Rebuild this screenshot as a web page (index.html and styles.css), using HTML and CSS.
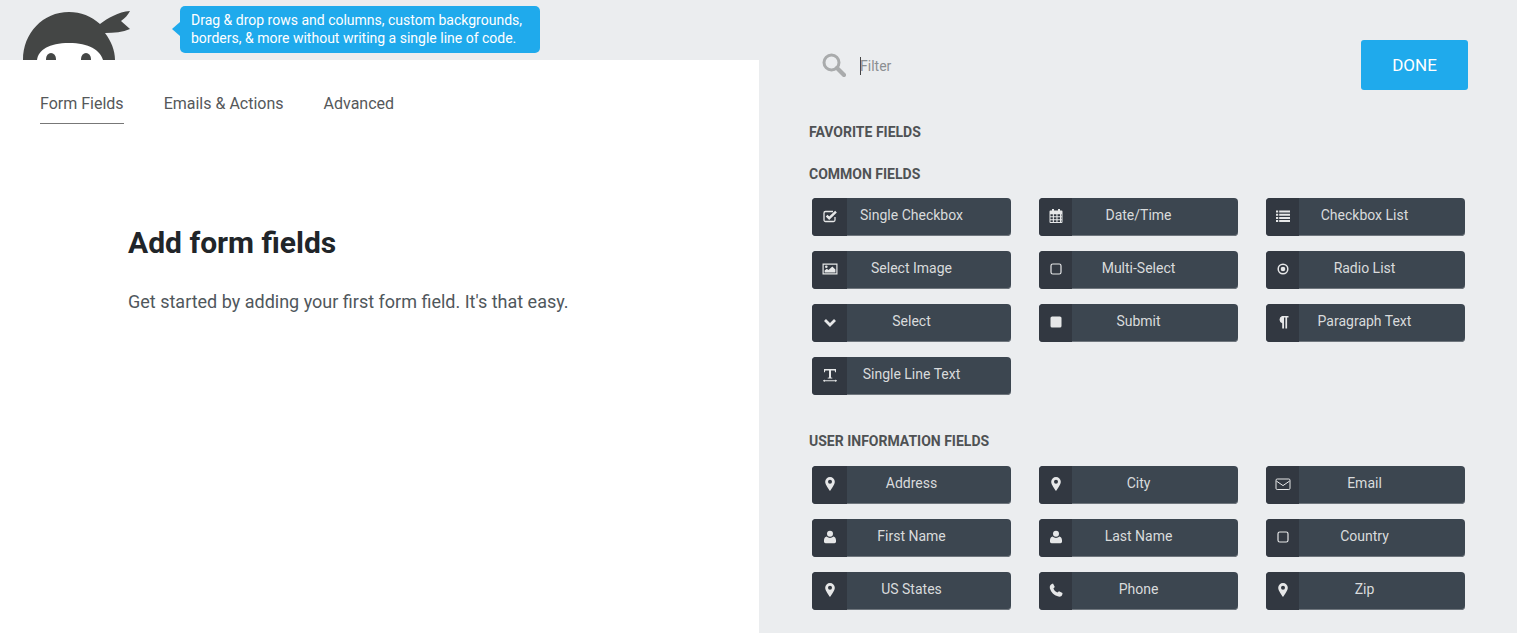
FILE: index.html
```html
<!DOCTYPE html>
<html lang="en">
<head>
    <meta charset="UTF-8">
    <meta name="viewport" content="width=device-width, initial-scale=1.0">
    <title>Add form fields</title>
    <link rel="stylesheet" href="styles.css">
</head>
<body>
    <!-- icon sprite -->
    <svg class="sprite" xmlns="http://www.w3.org/2000/svg">
        <symbol id="i-check" viewBox="0 0 16 16">
            <path d="M13 9v3a1.5 1.5 0 0 1-1.5 1.5h-8A1.5 1.5 0 0 1 2 12V5a1.5 1.5 0 0 1 1.5-1.5H11" fill="none" stroke="currentColor" stroke-width="1.3"/>
            <path d="M4.6 7.6 7.2 10.2 14 3.6" fill="none" stroke="currentColor" stroke-width="2.4"/>
        </symbol>
        <symbol id="i-calendar" viewBox="0 0 16 16">
            <path fill-rule="evenodd" d="M2.5 2.5H4V1h2v1.500h4V1h2v1.500h1.500a1 1 0 0 1 1 1V14a1 1 0 0 1-1 1h-11a1 1 0 0 1-1-1V3.500a1 1 0 0 1 1-1ZM2.500 6.200v2h2.300v-2Zm3.400 0v2h2.500v-2Zm3.600 0v2h2.500v-2Zm3.500 0v2h.5v-2ZM2.500 9.200v2h2.300v-2Zm3.400 0v2h2.500v-2Zm3.600 0v2h2.500v-2Zm3.500 0v2h.5v-2ZM2.500 12.200V14h2.300v-1.800Zm3.400 0V14h2.500v-1.800Zm3.600 0V14h2.500v-1.800Zm3.500 0V14h.5v-1.800Z"/>
        </symbol>
        <symbol id="i-list" viewBox="0 0 16 16">
            <path d="M1 2.500h2.200v2H1Zm3.200 0H15v2H4.200ZM1 5.700h2.200v2H1Zm3.200 0H15v2H4.200ZM1 8.900h2.200v2H1Zm3.200 0H15v2H4.200ZM1 12.100h2.200v2H1Zm3.200 0H15v2H4.200Z"/>
        </symbol>
        <symbol id="i-image" viewBox="0 0 16 16">
            <path fill-rule="evenodd" d="M.5 2.500h15v11H.5Zm1.200 1.200v8.600h12.600V3.700Z"/>
            <circle cx="4.300" cy="5.800" r="1.300"/>
            <path d="M2.600 11.400V9.600l2.200-1.800 1.700 1.300 3.800-3.600 3.100 3v2.900Z"/>
        </symbol>
        <symbol id="i-square-o" viewBox="0 0 16 16">
            <rect x="3" y="3" width="10" height="10" rx="1.800" fill="none" stroke="currentColor" stroke-width="1.200"/>
        </symbol>
        <symbol id="i-square" viewBox="0 0 16 16">
            <rect x="2.500" y="2.500" width="11" height="11" rx="1.600"/>
        </symbol>
        <symbol id="i-dot" viewBox="0 0 16 16">
            <circle cx="8" cy="8" r="4.800" fill="none" stroke="currentColor" stroke-width="1.500"/>
            <circle cx="8" cy="8" r="2.300"/>
        </symbol>
        <symbol id="i-chevron" viewBox="0 0 16 16">
            <path d="M3 6 8 11 13 6" fill="none" stroke="currentColor" stroke-width="2.800"/>
        </symbol>
        <symbol id="i-para" viewBox="0 0 16 16">
            <path d="M7.200 14.500V9.200A3.800 3.800 0 0 1 7 2h6.500v1.600h-1.400v10.900h-1.700V3.600H9v10.900Z"/>
        </symbol>
        <symbol id="i-text" viewBox="0 0 16 16">
            <path d="M2 2h12v3.300h-.9l-.4-1.700H9v6.800l1.300.4v.7H5.700v-.7l1.300-.4V3.600H3.300l-.4 1.700H2Z"/>
            <path d="M1.500 13.300h13v.9h-13Z"/>
            <path d="M1 13.750 2.800 12.500v2.500ZM15 13.750 13.200 12.500v2.500Z"/>
        </symbol>
        <symbol id="i-pin" viewBox="0 0 16 16">
            <path fill-rule="evenodd" d="M8 1a4.800 4.800 0 0 1 4.800 4.800c0 2.500-2.800 6.700-4.800 9.200-2-2.500-4.800-6.700-4.800-9.200A4.800 4.800 0 0 1 8 1Zm0 2.800a2 2 0 1 0 0 4 2 2 0 0 0 0-4Z"/>
        </symbol>
        <symbol id="i-user" viewBox="0 0 16 16">
            <circle cx="8" cy="4.800" r="3"/>
            <path d="M4.600 7.600C5.500 8.500 6.700 9 8 9s2.500-.5 3.400-1.400c1.600.3 2.600 1.700 2.600 4v1c0 1-.7 1.600-1.600 1.600H3.600c-.9 0-1.600-.6-1.600-1.600v-1c0-2.300 1-3.700 2.600-4Z"/>
        </symbol>
        <symbol id="i-phone" viewBox="0 0 16 16">
            <path d="M5 1.500 6.800 5 5.400 6.500c.7 1.700 2.200 3.300 4 4.100L11 9.200l3.500 1.800c0 1.600-.5 2.600-1.400 3.200-1 .6-2.200.6-3.400.1C5.900 13 3.100 10.300 1.900 6.400 1.300 4.300 2.500 2 5 1.500Z"/>
        </symbol>
        <symbol id="i-mail" viewBox="0 0 16 16">
            <rect x="1" y="3" width="14" height="10.500" rx="1.200" fill="none" stroke="currentColor" stroke-width="1"/>
            <path d="M1.300 5 8 9.600 14.700 5" fill="none" stroke="currentColor" stroke-width="1"/>
        </symbol>
        <symbol id="i-search" viewBox="0 0 24 24">
            <circle cx="9.500" cy="9.500" r="7.500" fill="none" stroke="currentColor" stroke-width="3"/>
            <path d="M15 15 22 22" fill="none" stroke="currentColor" stroke-width="4.200" stroke-linecap="round"/>
        </symbol>
    </svg>

    <div class="builder">
        <div class="main-col">
            <div class="top-bar">
                <svg class="logo" viewBox="0 0 140 60" xmlns="http://www.w3.org/2000/svg">
                    <path fill="#444645" d="M23 60C23 33 43 12 69 12c12 0 22 4 31 12 8-6 18-12 30-13-2 4-5 7-9 10l9 8c-7 3-16 4-25 4 6 8 10 17 10 27Z"/>
                    <path fill="#fff" d="M37 60c1-10 12-17 32-17s31 7 34 17Z"/>
                    <ellipse fill="#444645" cx="51" cy="59" rx="5" ry="6"/>
                    <ellipse fill="#444645" cx="86" cy="59" rx="5" ry="6"/>
                </svg>
                <div class="tip">Drag &amp; drop rows and columns, custom backgrounds, borders, &amp; more without writing a single line of code.</div>
            </div>
            <div class="panel">
                <div class="tabs">
                    <div class="tab active">Form Fields</div>
                    <div class="tab">Emails &amp; Actions</div>
                    <div class="tab">Advanced</div>
                </div>
                <div class="intro">
                    <h1>Add form fields</h1>
                    <p>Get started by adding your first form field. It's that easy.</p>
                </div>
            </div>
        </div>

        <div class="side-col">
            <div class="filter-row">
                <svg class="search-icon"><use href="#i-search"/></svg>
                <div class="filter-input"><span class="caret"></span>Filter</div>
                <button class="done">DONE</button>
            </div>

            <div class="section-title first">Favorite Fields</div>

            <div class="section-title">Common Fields</div>
            <div class="field-grid">
                <div class="field"><span class="field-icon"><svg><use href="#i-check"/></svg></span><span class="field-name">Single Checkbox</span></div>
                <div class="field"><span class="field-icon"><svg><use href="#i-calendar"/></svg></span><span class="field-name">Date/Time</span></div>
                <div class="field"><span class="field-icon"><svg><use href="#i-list"/></svg></span><span class="field-name">Checkbox List</span></div>
                <div class="field"><span class="field-icon"><svg><use href="#i-image"/></svg></span><span class="field-name">Select Image</span></div>
                <div class="field"><span class="field-icon"><svg><use href="#i-square-o"/></svg></span><span class="field-name">Multi-Select</span></div>
                <div class="field"><span class="field-icon"><svg><use href="#i-dot"/></svg></span><span class="field-name">Radio List</span></div>
                <div class="field"><span class="field-icon"><svg><use href="#i-chevron"/></svg></span><span class="field-name">Select</span></div>
                <div class="field"><span class="field-icon"><svg><use href="#i-square"/></svg></span><span class="field-name">Submit</span></div>
                <div class="field"><span class="field-icon"><svg><use href="#i-para"/></svg></span><span class="field-name">Paragraph Text</span></div>
                <div class="field"><span class="field-icon"><svg><use href="#i-text"/></svg></span><span class="field-name">Single Line Text</span></div>
            </div>

            <div class="section-title user">User Information Fields</div>
            <div class="field-grid user-grid">
                <div class="field"><span class="field-icon"><svg><use href="#i-pin"/></svg></span><span class="field-name">Address</span></div>
                <div class="field"><span class="field-icon"><svg><use href="#i-pin"/></svg></span><span class="field-name">City</span></div>
                <div class="field"><span class="field-icon"><svg><use href="#i-mail"/></svg></span><span class="field-name">Email</span></div>
                <div class="field"><span class="field-icon"><svg><use href="#i-user"/></svg></span><span class="field-name">First Name</span></div>
                <div class="field"><span class="field-icon"><svg><use href="#i-user"/></svg></span><span class="field-name">Last Name</span></div>
                <div class="field"><span class="field-icon"><svg><use href="#i-square-o"/></svg></span><span class="field-name">Country</span></div>
                <div class="field"><span class="field-icon"><svg><use href="#i-pin"/></svg></span><span class="field-name">US States</span></div>
                <div class="field"><span class="field-icon"><svg><use href="#i-phone"/></svg></span><span class="field-name">Phone</span></div>
                <div class="field"><span class="field-icon"><svg><use href="#i-pin"/></svg></span><span class="field-name">Zip</span></div>
            </div>
        </div>
    </div>
</body>
</html>
```

FILE: styles.css
```css
html, body {
    height: 100%;
}

body {
    margin: 0;
    overflow: hidden;
    font-family: Roboto, "Liberation Sans", sans-serif;
    background-color: #ebedef;
    color: #4f5254;
}

.sprite {
    display: none;
}

.builder {
    display: flex;
    height: 100%;
}

.main-col {
    display: flex;
    flex-direction: column;
    width: 759px;
    flex-shrink: 0;
}

.top-bar {
    display: flex;
    height: 60px;
    flex-shrink: 0;
}

.logo {
    width: 140px;
    height: 60px;
    flex-shrink: 0;
}

.tip {
    position: relative;
    box-sizing: border-box;
    width: 360px;
    height: 47px;
    margin: 6px 0 0 40px;
    padding: 5px 11px;
    border-radius: 5px;
    background-color: #1faaec;
    color: #fff;
    font-size: 14px;
    line-height: 18px;
}

.tip::before {
    content: "";
    position: absolute;
    left: -8px;
    top: 16px;
    border-top: 7px solid transparent;
    border-bottom: 7px solid transparent;
    border-right: 8px solid #1faaec;
}

.panel {
    flex: 1;
    background-color: #fff;
}

.tabs {
    display: flex;
    gap: 40px;
    padding: 34px 40px 0;
}

.tab {
    height: 29px;
    font-size: 16px;
    line-height: 20px;
    color: #55585a;
}

.tab.active {
    border-bottom: 1px solid #777;
}

.intro {
    padding: 101px 0 0 128px;
}

h1 {
    margin: 0 0 29px;
    font-size: 30px;
    line-height: 36px;
    font-weight: 700;
    color: #212529;
}

.intro p {
    margin: 0;
    font-size: 18px;
    line-height: 24px;
    color: #50575c;
}

.side-col {
    flex: 1;
    padding: 40px 49px 0 50px;
}

.filter-row {
    display: flex;
    align-items: center;
    height: 50px;
}

.search-icon {
    width: 24px;
    height: 24px;
    margin-left: 13px;
    color: #a9abac;
}

.filter-input {
    display: flex;
    align-items: center;
    flex: 1;
    margin-left: 14px;
    padding-top: 1px;
    font-size: 14px;
    color: #8b8f92;
}

.caret {
    width: 1px;
    height: 18px;
    margin-right: -1px;
    background-color: #444;
}

.done {
    width: 107px;
    height: 50px;
    border: none;
    border-radius: 3px;
    background-color: #1faaec;
    color: #fff;
    font-family: inherit;
    font-size: 17px;
}

.section-title {
    margin-top: 24px;
    font-size: 14px;
    line-height: 18px;
    font-weight: 700;
    text-transform: uppercase;
    color: #4f5254;
}

.section-title.first {
    margin-top: 33px;
}

.section-title.user {
    margin-top: 37px;
}

.field-grid {
    display: grid;
    grid-template-columns: repeat(3, 199px);
    column-gap: 28px;
    row-gap: 15px;
    margin: 15px 0 0 3px;
}

.user-grid {
    margin-top: 16px;
}

.field {
    position: relative;
    box-sizing: border-box;
    display: flex;
    align-items: center;
    justify-content: center;
    height: 38px;
    border-radius: 4px;
    overflow: hidden;
    background-color: #3c4650;
    box-shadow: inset 0 -1px 0 #6f767d;
}

.field-icon {
    position: absolute;
    left: 0;
    top: 0;
    bottom: 0;
    display: flex;
    align-items: center;
    justify-content: center;
    width: 33px;
    padding-bottom: 2px;
    box-sizing: border-box;
    background-color: #323841;
    color: #e6e7e8;
}

.field:nth-child(3n+1) .field-icon {
    width: 35px;
}

.field:nth-child(3n) .field-name {
    margin-left: -2px;
}

.field-icon svg {
    width: 16px;
    height: 16px;
    fill: currentColor;
}

.field-name {
    margin-top: -5px;
    font-size: 14px;
    color: #d9dbdc;
}
```
